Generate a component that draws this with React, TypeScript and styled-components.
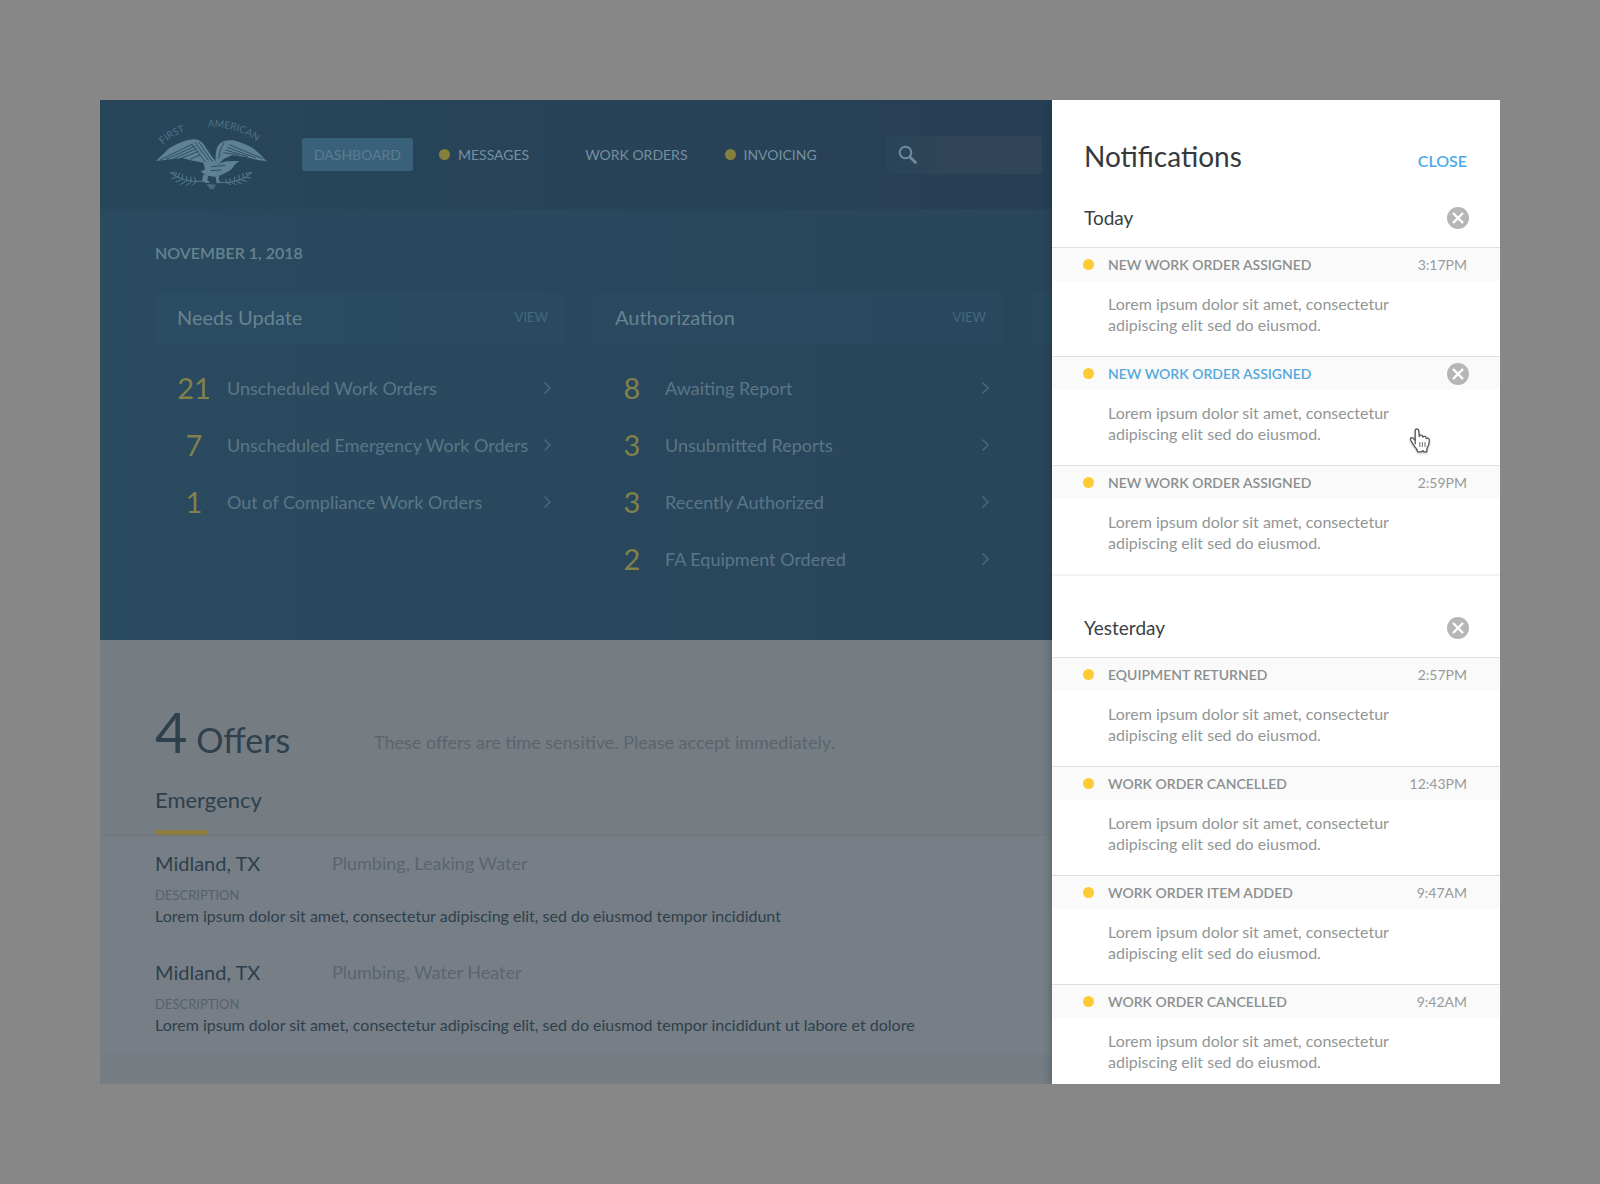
import React from "react";
import styled, { createGlobalStyle } from "styled-components";

const GlobalStyle = createGlobalStyle`
  *, *::before, *::after { box-sizing: border-box; }
  body { margin: 0; background: #878787; }
  body, button, input { font-family: Lato, "Liberation Sans", sans-serif; }
  h1, h2, h3, p, ul { margin: 0; padding: 0; font-weight: 400; }
  ul { list-style: none; }
  button { border: 0; padding: 0; background: none; cursor: pointer; }
  a { color: inherit; text-decoration: none; }
`;

const Page = styled.div`
  display: flex;
  height: 100vh;
  padding: 100px;
`;

const Frame = styled.div`
  flex: 1;
  display: grid;
  grid-template-columns: minmax(0, 1fr) 448px;
  overflow: hidden;
`;

const Main = styled.main`
  min-height: 0;
  overflow: hidden;
  background: #757c82;
`;

/* ---------- top bar ---------- */

const TopBar = styled.header`
  display: flex;
  align-items: center;
  height: 109px;
  padding: 0 10px 0 55px;
  background: linear-gradient(90deg, #28465b, #273f54);
`;

const LogoLink = styled.a`
  display: flex;
  margin-right: 35px;
`;

const Nav = styled.nav`
  display: flex;
  align-items: center;
  gap: 37px;
`;

const ActiveLink = styled.a`
  width: 111px;
  margin-right: -11px;
  border-radius: 3px;
  background: #3a617a;
  color: #5b7d92;
  font-size: 14px;
  line-height: 33px;
  text-align: center;
`;

const NavLink = styled.a`
  display: flex;
  align-items: center;
  gap: 8px;
  color: #75909f;
  font-size: 14px;
  line-height: 20px;
  white-space: nowrap;
`;

const Dot = styled.span<{ $color: string }>`
  flex: none;
  width: 11px;
  height: 11px;
  border-radius: 50%;
  background: ${(p) => p.$color};
`;

const SearchBox = styled.label`
  flex: 1;
  display: flex;
  align-items: center;
  min-width: 0;
  height: 38px;
  margin-left: 69px;
  padding-left: 12px;
  border-radius: 4px;
  background: linear-gradient(90deg, #28445a, #304557 40%);
  color: #728c9c;
`;

const SearchInput = styled.input`
  flex: 1;
  min-width: 0;
  border: 0;
  outline: 0;
  background: none;
  color: inherit;
  font-size: 14px;
`;

/* ---------- summary ---------- */

const Hero = styled.section`
  padding: 34px 0 53px 55px;
  background: linear-gradient(90deg, #2a4a60, #29455a);
`;

const DateLine = styled.p`
  color: #66838f;
  font-size: 16px;
  font-weight: 600;
  line-height: 20px;
`;

const Cards = styled.div`
  display: flex;
  gap: 28px;
  margin-top: 29px;
  overflow: hidden;
`;

const Card = styled.section`
  flex: 0 0 410px;
`;

const CardHead = styled.div`
  display: flex;
  align-items: center;
  justify-content: space-between;
  height: 52px;
  padding: 0 17px 2px 22px;
  background: rgba(60, 100, 125, 0.1);
`;

const CardTitle = styled.h2`
  color: #67838f;
  font-size: 20px;
`;

const ViewLink = styled.a`
  color: #45697f;
  font-size: 13px;
`;

const CardList = styled.ul`
  padding: 15px 13px 0 22px;
`;

const StatLink = styled.a`
  display: flex;
  align-items: center;
  height: 57px;
  color: #5a7687;
  font-size: 18px;
  white-space: nowrap;
`;

const Count = styled.span`
  width: 34px;
  margin-right: 16px;
  color: #81814a;
  font-size: 29px;
  text-align: center;
`;

const StatLabel = styled.span`
  flex: 1;
`;

/* ---------- offers ---------- */

const Offers = styled.section`
  padding-top: 64px;
`;

const OffersHead = styled.div`
  display: flex;
  align-items: flex-end;
  height: 56px;
  padding-left: 55px;
`;

const OffersTitle = styled.h1`
  width: 219px;
  color: #2e404c;
  font-size: 34px;
  line-height: 40px;
`;

const OffersCount = styled.span`
  font-size: 56px;
  line-height: 56px;
`;

const OffersNote = styled.p`
  color: #5b656d;
  font-size: 18px;
  line-height: 36px;
  white-space: nowrap;
`;

const GroupHead = styled.div`
  margin-top: 26px;
  padding-left: 55px;
  border-bottom: 1px solid #70777e;

  &::after {
    content: "";
    display: block;
    width: 53px;
    height: 5px;
    margin-top: 16px;
    background: #8f7d3f;
  }
`;

const GroupTitle = styled.h2`
  color: #2e404c;
  font-size: 22px;
  line-height: 28px;
`;

const OfferItem = styled.li`
  padding: 13px 20px 18px 55px;
  background: #777e85;
`;

const OfferTop = styled.div`
  display: flex;
  line-height: 28px;
`;

const City = styled.h3`
  width: 177px;
  color: #2e404c;
  font-size: 20px;
`;

const Trade = styled.p`
  color: #5b656d;
  font-size: 18px;
`;

const FieldName = styled.p`
  margin-top: 8px;
  color: #56616a;
  font-size: 13px;
  line-height: 20px;
`;

const OfferText = styled.p`
  color: #2e404c;
  font-size: 16px;
  line-height: 22px;
  white-space: nowrap;
`;

/* ---------- notifications drawer ---------- */

const Drawer = styled.aside`
  position: relative;
  min-height: 0;
  padding-top: 39px;
  background: #fff;
  box-shadow: -1px 0 8px rgba(0, 40, 50, 0.3);
`;

const DrawerHead = styled.div`
  display: flex;
  align-items: baseline;
  justify-content: space-between;
  margin-bottom: 17px;
  padding: 0 33px 0 32px;
`;

const DrawerTitle = styled.h2`
  color: #35393d;
  font-size: 28px;
  line-height: 34px;
`;

const CloseButton = styled.button`
  color: #4aaae6;
  font-size: 16px;
  font-weight: 600;
  line-height: 20px;
`;

const DayHead = styled.div`
  display: flex;
  align-items: center;
  justify-content: space-between;
  height: 57px;
  padding: 0 31px 2px 32px;
`;

const DayTitle = styled.h3`
  color: #3c4043;
  font-size: 19px;
`;

const RoundButton = styled.button`
  display: flex;
`;

const DayList = styled.ul<{ $closed?: boolean }>`
  ${(p) => p.$closed && "margin-bottom: 24px; border-bottom: 2px solid #f3f3f3;"}
`;

const Note = styled.li`
  position: relative;
  padding-bottom: 21px;
  border-top: 1px solid #dedfdf;
`;

const NoteHead = styled.div`
  display: flex;
  align-items: center;
  gap: 14px;
  height: 33px;
  padding: 0 31px;
  background: #fafafa;
`;

const NoteTitle = styled.h4<{ $active?: boolean }>`
  flex: 1;
  margin: 0;
  color: ${(p) => (p.$active ? "#55a9dd" : "#8b8f8f")};
  font-size: 14px;
  font-weight: 600;
`;

const Time = styled.time`
  padding-right: 2px;
  color: #979b9b;
  font-size: 14px;
`;

const NoteText = styled.p`
  margin-top: 12px;
  padding: 0 100px 0 56px;
  color: #929696;
  font-size: 16px;
  line-height: 21px;
`;

const Pointer = styled.span`
  position: absolute;
  top: 70px;
  right: 68px;
  display: flex;
  filter: drop-shadow(0 1px 1px rgba(0, 0, 0, 0.25));
`;

/* ---------- drawings ---------- */

const Logo = styled.svg`
  overflow: visible;
`;

const EagleLogo = () => (
  <Logo width="112" height="75" viewBox="15 15 336 225" role="img" aria-label="First American">
    <defs>
      <path id="logo-arc" d="M24 116 C 90 22, 275 22, 348 116" />
    </defs>
    <g fill="#4d7288" fontSize="30" fontFamily="Lato, sans-serif" textAnchor="middle">
      <text>
        <textPath href="#logo-arc" startOffset="17%">FIRST</textPath>
      </text>
      <text>
        <textPath href="#logo-arc" startOffset="68%">AMERICAN</textPath>
      </text>
    </g>
    <g fill="#5f8194">
      <path d="M18 147 L58 108 Q100 84 130 82 Q150 82 162 98 L186 134 L204 156 L206 176 L186 190 L166 174 L160 152 L128 146 L96 138 L60 142 Z" />
      <path d="M197 150 Q194 112 208 96 Q222 82 248 85 Q284 94 308 108 Q332 126 350 148 L322 144 L284 134 L246 130 L222 140 L206 156 Z" />
      <path d="M196 158 L228 148 L268 147 L256 157 L242 174 L216 188 L196 194 L176 192 L162 186 L152 178 L168 172 Z" />
      <path d="M160 188 L174 190 L172 204 L180 212 L166 212 L156 206 Z" />
      <path d="M196 190 L208 188 L206 204 L214 212 L200 214 Z" />
      <path d="M170 216 L198 218 L190 232 L180 232 Z" opacity="0.6" />
    </g>
    <g fill="none" stroke="#28465b" strokeWidth="2.6">
      <path d="M30 144 L128 96 M48 142 L136 102 M70 140 L140 110 M94 138 L146 118 M120 142 L152 128 M134 90 L176 146 M124 96 L166 150 M146 90 L188 150" />
      <path d="M338 140 L238 98 M318 138 L232 106 M294 134 L226 114 M268 130 L220 122 M222 92 Q208 112 206 140" />
      <path d="M184 164 L226 160 M182 176 L214 174" />
    </g>
    <g fill="none" stroke="#557a8e" strokeWidth="3" strokeLinecap="round">
      <path d="M62 182 Q98 212 158 208 M64 182 l16 1 M74 192 l6 -8 M84 198 l4 -14 M96 204 l2 -16 M110 208 l0 -16 M124 209 l-2 -14 M138 209 l-4 -12 M78 196 l-12 4 M92 204 l-14 6 M106 209 l-14 8 M122 211 l-12 8 M138 211 l-10 7" />
      <path d="M305 182 Q270 214 212 212 M303 182 l-16 2 M294 192 l-8 -8 M282 199 l-4 -14 M268 205 l-2 -16 M254 209 l0 -14 M240 211 l0 -12 M228 212 l0 -10 M288 196 l14 2 M274 204 l16 4 M260 209 l14 6 M246 212 l12 6 M232 213 l10 5" />
    </g>
  </Logo>
);

const SearchIcon = () => (
  <svg width="20" height="20" viewBox="0 0 20 20" fill="none" stroke="currentColor" aria-hidden="true">
    <circle cx="7.5" cy="7.5" r="5.8" strokeWidth="2" />
    <path d="M12 12 L18.2 18.2" strokeWidth="2.8" />
  </svg>
);

const Chevron = () => (
  <svg width="9" height="14" viewBox="0 0 9 14" fill="none" stroke="#44687d" strokeWidth="1.6" aria-hidden="true">
    <path d="M1.5 1.5 L7 7 L1.5 12.5" />
  </svg>
);

const ClearIcon = () => (
  <svg width="22" height="22" viewBox="0 0 22 22" aria-hidden="true">
    <circle cx="11" cy="11" r="11" fill="#b5b7b7" />
    <path d="M6 6 L16 16 M16 6 L6 16" stroke="#fff" strokeWidth="2.4" />
  </svg>
);

const HandIcon = () => (
  <svg width="24" height="28" viewBox="0 0 24 28" aria-hidden="true">
    <path
      d="M7.2 17.2 L7.2 4 Q7.2 2 8.9 2 Q10.6 2 10.8 4 L11.3 9.6 Q11.6 8 13.2 8.2 Q14.6 8.4 14.8 10.2 Q15.4 9 16.9 9.4 Q18.2 9.8 18.2 11.6 Q19.2 10.8 20.4 11.4 Q21.6 12.2 21.3 14.4 Q20.9 18.4 19 21.4 L18.6 24.8 L15.8 24.8 L15 23.6 L13.4 24.8 L9.6 24.8 Q9.4 22 6.6 19.4 Q4.6 17 2.8 13.2 Q2 11 3.6 10.6 Q5 10.4 7.2 13.6"
      fill="#fff"
      stroke="#55585a"
      strokeWidth="1.3"
      strokeLinejoin="round"
    />
    <path d="M11.8 15 v5 M14.4 15 v5 M17 15 v5" stroke="#777" strokeWidth="1.1" />
  </svg>
);

/* ---------- data ---------- */

const summary = [
  {
    title: "Needs Update",
    rows: [
      [21, "Unscheduled Work Orders"],
      [7, "Unscheduled Emergency Work Orders"],
      [1, "Out of Compliance Work Orders"],
    ],
  },
  {
    title: "Authorization",
    rows: [
      [8, "Awaiting Report"],
      [3, "Unsubmitted Reports"],
      [3, "Recently Authorized"],
      [2, "FA Equipment Ordered"],
    ],
  },
];

const offers = [
  {
    city: "Midland, TX",
    trade: "Plumbing, Leaking Water",
    text: "Lorem ipsum dolor sit amet, consectetur adipiscing elit, sed do eiusmod tempor incididunt",
  },
  {
    city: "Midland, TX",
    trade: "Plumbing, Water Heater",
    text: "Lorem ipsum dolor sit amet, consectetur adipiscing elit, sed do eiusmod tempor incididunt ut labore et dolore",
  },
];

type Item = { id: number; title: string; time?: string };

const days: { name: string; closed?: boolean; items: Item[] }[] = [
  {
    name: "Today",
    closed: true,
    items: [
      { id: 1, title: "NEW WORK ORDER ASSIGNED", time: "3:17PM" },
      { id: 2, title: "NEW WORK ORDER ASSIGNED" },
      { id: 3, title: "NEW WORK ORDER ASSIGNED", time: "2:59PM" },
    ],
  },
  {
    name: "Yesterday",
    items: [
      { id: 4, title: "EQUIPMENT RETURNED", time: "2:57PM" },
      { id: 5, title: "WORK ORDER CANCELLED", time: "12:43PM" },
      { id: 6, title: "WORK ORDER ITEM ADDED", time: "9:47AM" },
      { id: 7, title: "WORK ORDER CANCELLED", time: "9:42AM" },
    ],
  },
];

const HOVERED_ID = 2;

const NotificationRow = ({ item }: { item: Item }) => {
  const hovered = item.id === HOVERED_ID;
  return (
    <Note>
      <NoteHead>
        <Dot $color="#fdcb35" />
        <NoteTitle $active={hovered}>{item.title}</NoteTitle>
        {hovered ? (
          <RoundButton type="button" aria-label="Dismiss notification">
            <ClearIcon />
          </RoundButton>
        ) : (
          <Time>{item.time}</Time>
        )}
      </NoteHead>
      <NoteText>
        Lorem ipsum dolor sit amet, consectetur
        <br />
        adipiscing elit sed do eiusmod.
      </NoteText>
      {hovered && (
        <Pointer>
          <HandIcon />
        </Pointer>
      )}
    </Note>
  );
};

export default function App() {
  return (
    <Page>
      <GlobalStyle />
      <Frame>
        <Main>
          <TopBar>
            <LogoLink href="#">
              <EagleLogo />
            </LogoLink>
            <Nav>
              <ActiveLink href="#">DASHBOARD</ActiveLink>
              <NavLink href="#">
                <Dot $color="#85803c" />
                MESSAGES
              </NavLink>
              <NavLink href="#">
                <Dot $color="transparent" />
                WORK ORDERS
              </NavLink>
              <NavLink href="#">
                <Dot $color="#85803c" />
                INVOICING
              </NavLink>
            </Nav>
            <SearchBox>
              <SearchIcon />
              <SearchInput type="search" aria-label="Search" />
            </SearchBox>
          </TopBar>

          <Hero>
            <DateLine>NOVEMBER 1, 2018</DateLine>
            <Cards>
              {summary.map((card) => (
                <Card key={card.title}>
                  <CardHead>
                    <CardTitle>{card.title}</CardTitle>
                    <ViewLink href="#">VIEW</ViewLink>
                  </CardHead>
                  <CardList>
                    {card.rows.map(([count, label]) => (
                      <li key={label}>
                        <StatLink href="#">
                          <Count>{count}</Count>
                          <StatLabel>{label}</StatLabel>
                          <Chevron />
                        </StatLink>
                      </li>
                    ))}
                  </CardList>
                </Card>
              ))}
              <Card>
                <CardHead />
              </Card>
            </Cards>
          </Hero>

          <Offers>
            <OffersHead>
              <OffersTitle>
                <OffersCount>4</OffersCount> Offers
              </OffersTitle>
              <OffersNote>These offers are time sensitive. Please accept immediately.</OffersNote>
            </OffersHead>
            <GroupHead>
              <GroupTitle>Emergency</GroupTitle>
            </GroupHead>
            <ul>
              {offers.map((offer) => (
                <OfferItem key={offer.trade}>
                  <OfferTop>
                    <City>{offer.city}</City>
                    <Trade>{offer.trade}</Trade>
                  </OfferTop>
                  <FieldName>DESCRIPTION</FieldName>
                  <OfferText>{offer.text}</OfferText>
                </OfferItem>
              ))}
            </ul>
          </Offers>
        </Main>

        <Drawer>
          <DrawerHead>
            <DrawerTitle>Notifications</DrawerTitle>
            <CloseButton type="button">CLOSE</CloseButton>
          </DrawerHead>
          {days.map((day) => (
            <section key={day.name}>
              <DayHead>
                <DayTitle>{day.name}</DayTitle>
                <RoundButton type="button" aria-label={`Clear ${day.name}`}>
                  <ClearIcon />
                </RoundButton>
              </DayHead>
              <DayList $closed={day.closed}>
                {day.items.map((item) => (
                  <NotificationRow key={item.id} item={item} />
                ))}
              </DayList>
            </section>
          ))}
        </Drawer>
      </Frame>
    </Page>
  );
}
